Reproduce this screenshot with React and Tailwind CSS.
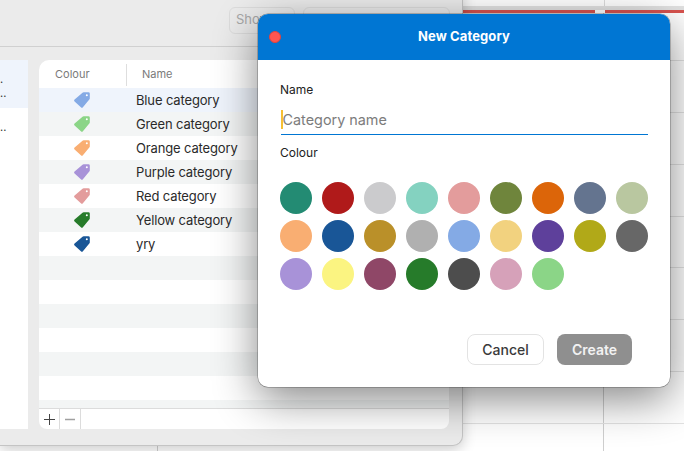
import React from "react";
import { Search } from "lucide-react";

const cats = [
  ["Blue category", "#84aae5"],
  ["Green category", "#8bd587"],
  ["Orange category", "#f9ae72"],
  ["Purple category", "#a892d8"],
  ["Red category", "#e39c9c"],
  ["Yellow category", "#267b2a"],
  ["yry", "#195697"],
];
const swatches = [
  "#238b73","#b01a1a","#cbcbcd","#84d2c0","#e39c9c","#6f853c","#dc6509","#64748f","#b9c7a0",
  "#f9ae72","#195697","#ba9029","#b0b0b0","#84aae5","#f2d27f","#5e409b","#b1a918","#676767",
  "#a892d8","#fbf481","#8f4767","#267b2a","#4d4d4d","#d6a1b9","#8bd587",
];

function Tag({ color }) {
  return (
    <svg width="16" height="16" viewBox="0 0 16 16" className="block">
      <path
        d="M9.6 0.2H14.4a1.4 1.4 0 0 1 1.4 1.4V6.4a1.6 1.6 0 0 1-.5 1.1L8.9 15.3a1.4 1.4 0 0 1-2 0L.6 9.5a1.4 1.4 0 0 1 0-2L8.5.7a1.6 1.6 0 0 1 1.1-.5Z"
        fill={color}
      />
      <circle cx="12.8" cy="3.2" r="1" fill="#fff" />
    </svg>
  );
}

export default function App() {
  const rowsBg = Array.from({ length: 14 });
  return (
    <div className="relative w-[684px] h-[451px] overflow-hidden bg-white [font-family:Inter,sans-serif]">
      {/* calendar behind */}
      <div className="flex flex-col">
        <div className="h-[6px] flex justify-end"><div className="w-[80px] border-l border-[#dcdcdc]" /></div>
        <div className="h-[4px] bg-[#e2e2e2]" />
        <div className="h-[3px] flex justify-end gap-[10px] pl-[463px]">
          <div className="flex-1 bg-[#d9534f]" />
          <div className="w-[79px] bg-[#d9534f]" />
        </div>
        <div className="h-[48px] border-b border-[#e3e3e3] grid grid-cols-[158px_446px_80px]">
          <div className="border-r border-[#cfcfcf]" /><div className="border-r border-[#cfcfcf]" /><div />
        </div>
        {[0,1,2,3,4,5,6,7].map((i) => (
          <div key={i} className="h-[51.86px] border-b border-[#e3e3e3] grid grid-cols-[158px_446px_80px]">
            <div className="border-r border-[#cfcfcf]" /><div className="border-r border-[#cfcfcf]" /><div />
          </div>
        ))}
      </div>

      {/* settings window */}
      <div className="absolute left-0 top-[-20px] w-[463px] h-[466px] rounded-br-[10px] rounded-tr-[10px] bg-[#ebebeb] border-r border-b border-[#c4c4c4] shadow-[0_4px_14px_rgba(0,0,0,0.2)] flex flex-col">
        <div className="h-[67px] shrink-0 border-b border-[#d0d0d0] flex items-center gap-2 pl-[229px] pt-[14px]">
          <div className="w-[66px] h-[27px] rounded-md border border-[#dcdcdc] text-[13px] text-[#a8a8a8] pl-[6px] flex items-center">Show</div>
          <div className="w-[147px] h-[27px] rounded-md border border-[#dcdcdc] pl-[6px] flex items-center">
            <Search size={13} className="text-[#888888]" />
          </div>
        </div>
        <div className="flex gap-[11px] pt-[13px] pr-[13px]">
          <div className="w-[28px] h-[369px] bg-white text-[#333333] text-[11px] leading-[14px]">
            <div className="h-[48px] bg-[#eff4fc] pt-[12px]">
              <div>.</div>
              <div>..</div>
            </div>
            <div className="pt-[12px]">..</div>
          </div>
          <div className="flex-1 h-[369px] rounded-t-[10px] rounded-b-[8px] bg-white overflow-hidden flex flex-col">
            <div className="h-[28px] shrink-0 flex items-center text-[11px] text-[#7a7a7a] pt-[1px]">
              <div className="w-[88px] pl-[16px] h-[22px] flex items-center border-r border-[#dedede]">Colour</div>
              <div className="pl-[15px]">Name</div>
            </div>
            <div className="h-[320px] shrink-0 overflow-hidden">
              {rowsBg.map((_, i) => {
                const c = cats[i];
                const bg = i === 0 ? "bg-[#eff4fc]" : i % 2 === 1 ? "bg-[#f3f5f5]" : "bg-white";
                return (
                  <div key={i} className={`h-[24px] flex items-center ${bg}`}>
                    {c && (
                      <>
                        <div className="w-[97px] pl-[35px]"><Tag color={c[1]} /></div>
                        <div className="text-[13px] tracking-[-0.14px] text-[#2a2a2a] pt-[2px]">{c[0]}</div>
                      </>
                    )}
                  </div>
                );
              })}
            </div>
            <div className="h-[21px] shrink-0 border-t border-[#dcdcdc] flex">
              <div className="w-[21px] border-r border-[#dcdcdc] flex items-center justify-center">
                <svg width="11" height="11" viewBox="0 0 11 11"><path d="M5.5 0V11M0 5.5H11" stroke="#444" strokeWidth="1" /></svg>
              </div>
              <div className="w-[21px] border-r border-[#dcdcdc] flex items-center justify-center">
                <svg width="10" height="3" viewBox="0 0 10 3"><path d="M0 1.5H10" stroke="#a0a0a0" strokeWidth="1.6" /></svg>
              </div>
            </div>
          </div>
        </div>
      </div>

      {/* dialog */}
      <div className="absolute left-[258px] top-[14px] w-[412px] h-[373px] rounded-[10px] bg-white overflow-hidden shadow-[0_0_0_0.5px_rgba(0,0,0,0.4),0_12px_44px_rgba(0,0,0,0.48)] flex flex-col">
        <div className="relative h-[46px] shrink-0 bg-[#0076d3] flex items-center justify-center">
          <div className="absolute left-[11px] top-[17px] w-[12px] h-[12px] rounded-full bg-[#ff5550] border border-[#e0443e]" />
          <span className="text-white font-bold text-[13px] tracking-[0.1px]">New Category</span>
        </div>
        <div className="flex-1 pl-[23px] pr-[22px] flex flex-col">
          <div className="pt-[22px] -ml-[1px] text-[12px] leading-[16px] text-[#222222]">Name</div>
          <div className="mt-[12px] h-[25px] border-b border-[#0076d3] flex items-start">
            <div className="w-[1.5px] h-[19px] bg-[#f6c033]" />
            <span className="text-[14.4px] leading-[19px] text-[#7c7c7c]">Category name</span>
          </div>
          <div className="mt-[10px] -ml-[1px] text-[12px] leading-[16px] text-[#222222]">Colour</div>
          <div className="mt-[21px] -ml-[1px] grid grid-cols-[repeat(9,32px)] gap-x-[10px] gap-y-[6px]">
            {swatches.map((c, i) => (
              <div key={i} className="w-[32px] h-[32px] rounded-full" style={{ backgroundColor: c }} />
            ))}
          </div>
          <div className="mt-[44px] flex justify-end gap-[13px] pr-[16px]">
            <div className="w-[77px] h-[31px] rounded-lg border border-[#e3e3e3] flex items-center justify-center text-[14px] font-medium text-[#3a3a3a]">Cancel</div>
            <div className="w-[75px] h-[31px] rounded-lg bg-[#8f8f8f] flex items-center justify-center text-[14px] font-semibold text-[#f2f2f2]">Create</div>
          </div>
        </div>
      </div>
    </div>
  );
}
